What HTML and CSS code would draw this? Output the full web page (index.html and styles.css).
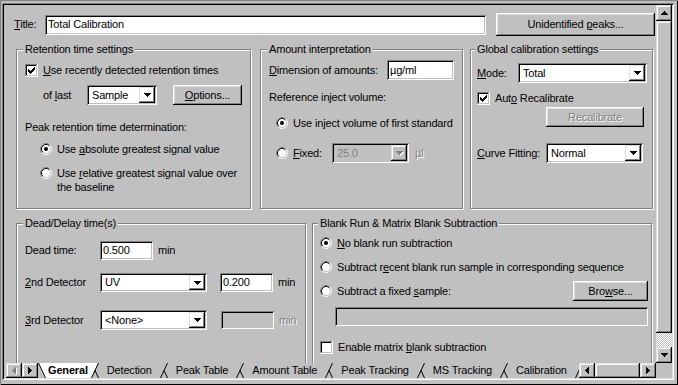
FILE: index.html
```html
<!DOCTYPE html>
<html>
<head>
<meta charset="utf-8">
<title>Total Calibration</title>
<link rel="stylesheet" href="styles.css">
</head>
<body>
<svg class="defs" width="0" height="0" aria-hidden="true">
  <defs>
    <symbol id="cb-on" viewBox="0 0 13 13">
      <rect x="0" y="0" width="13" height="13" fill="#fff"/>
      <rect x="0" y="0" width="12" height="1" fill="#808080"/>
      <rect x="0" y="0" width="1" height="12" fill="#808080"/>
      <rect x="1" y="1" width="10" height="1" fill="#000"/>
      <rect x="1" y="1" width="1" height="10" fill="#000"/>
      <rect x="1" y="11" width="11" height="1" fill="#c0c0c0"/>
      <rect x="11" y="1" width="1" height="11" fill="#c0c0c0"/>
      <path d="M3 5h1v3H3z M4 6h1v3H4z M5 7h1v3H5z M6 6h1v3H6z M7 5h1v3H7z M8 4h1v3H8z M9 3h1v3H9z" fill="#000"/>
    </symbol>
    <symbol id="cb-off" viewBox="0 0 13 13">
      <rect x="0" y="0" width="13" height="13" fill="#fff"/>
      <rect x="0" y="0" width="12" height="1" fill="#808080"/>
      <rect x="0" y="0" width="1" height="12" fill="#808080"/>
      <rect x="1" y="1" width="10" height="1" fill="#000"/>
      <rect x="1" y="1" width="1" height="10" fill="#000"/>
      <rect x="1" y="11" width="11" height="1" fill="#c0c0c0"/>
      <rect x="11" y="1" width="1" height="11" fill="#c0c0c0"/>
    </symbol>
    <symbol id="rd-off" viewBox="0 0 12 12">
      <circle cx="6" cy="6" r="5" fill="#fff"/>
      <path d="M2.11 9.89A5.5 5.5 0 0 1 9.89 2.11" fill="none" stroke="#808080"/>
      <path d="M9.89 2.11A5.5 5.5 0 0 1 2.11 9.89" fill="none" stroke="#fff"/>
      <path d="M2.82 9.18A4.5 4.5 0 0 1 9.18 2.82" fill="none" stroke="#000"/>
      <path d="M9.18 2.82A4.5 4.5 0 0 1 2.82 9.18" fill="none" stroke="#c0c0c0"/>
    </symbol>
    <symbol id="rd-on" viewBox="0 0 12 12">
      <circle cx="6" cy="6" r="5" fill="#fff"/>
      <path d="M2.11 9.89A5.5 5.5 0 0 1 9.89 2.11" fill="none" stroke="#808080"/>
      <path d="M9.89 2.11A5.5 5.5 0 0 1 2.11 9.89" fill="none" stroke="#fff"/>
      <path d="M2.82 9.18A4.5 4.5 0 0 1 9.18 2.82" fill="none" stroke="#000"/>
      <path d="M9.18 2.82A4.5 4.5 0 0 1 2.82 9.18" fill="none" stroke="#c0c0c0"/>
      <circle cx="6" cy="6" r="2" fill="#000"/>
    </symbol>
    <symbol id="ar-d" viewBox="0 0 7 4">
      <path d="M0 0h7v1H0z M1 1h5v1H1z M2 2h3v1H2z M3 3h1v1H3z" fill="#000"/>
    </symbol>
    <symbol id="ar-d-dis" viewBox="0 0 8 5">
      <path d="M1 1h7v1H1z M2 2h5v1H2z M3 3h3v1H3z M4 4h1v1H4z" fill="#fff"/>
      <path d="M0 0h7v1H0z M1 1h5v1H1z M2 2h3v1H2z M3 3h1v1H3z" fill="#808080"/>
    </symbol>
    <symbol id="ar-u" viewBox="0 0 7 4">
      <path d="M3 0h1v1H3z M2 1h3v1H2z M1 2h5v1H1z M0 3h7v1H0z" fill="#000"/>
    </symbol>
    <symbol id="ar-l" viewBox="0 0 4 7">
      <path d="M3 0h1v7H3z M2 1h1v5H2z M1 2h1v3H1z M0 3h1v1H0z" fill="#000"/>
    </symbol>
    <symbol id="ar-l-dis" viewBox="0 0 5 8">
      <path d="M4 1h1v7H4z M3 2h1v5H3z M2 3h1v3H2z M1 4h1v1H1z" fill="#fff"/>
      <path d="M3 0h1v7H3z M2 1h1v5H2z M1 2h1v3H1z M0 3h1v1H0z" fill="#808080"/>
    </symbol>
    <symbol id="ar-r" viewBox="0 0 4 7">
      <path d="M0 0h1v7H0z M1 1h1v5H1z M2 2h1v3H2z M3 3h1v1H3z" fill="#000"/>
    </symbol>
  </defs>
</svg>

<div class="window">
  <div class="client">
    <div class="main">
      <div class="pane">
        <div class="title-row">
          <span class="lbl lbl-title"><u>T</u>itle:</span>
          <div class="field field-title">Total Calibration</div>
          <div class="btn btn-unid"><span>Unidentified <u>p</u>eaks...</span></div>
        </div>

        <div class="groups groups-top">
          <div class="group g-ret">
            <div class="gt">Retention time settings</div>
            <div class="row r-ret1">
              <svg class="cb"><use href="#cb-on"/></svg>
              <span class="cb-lbl"><u>U</u>se recently detected retention times</span>
            </div>
            <div class="row r-ret2">
              <span class="lbl lbl-oflast">of <u>l</u>ast</span>
              <div class="combo combo-sample">
                <span class="combo-text">Sample</span>
                <span class="dd"><svg class="arr-d"><use href="#ar-d"/></svg></span>
              </div>
              <div class="btn btn-options"><span><u>O</u>ptions...</span></div>
            </div>
            <div class="r-ret3">Peak retention time determination:</div>
            <div class="row r-ret4">
              <svg class="radio"><use href="#rd-on"/></svg>
              <span class="rd-lbl">Use <u>a</u>bsolute greatest signal value</span>
            </div>
            <div class="row r-ret5">
              <svg class="radio radio-top"><use href="#rd-off"/></svg>
              <span class="rd-lbl">Use <u>r</u>elative greatest signal value over<br>the baseline</span>
            </div>
          </div>

          <div class="group g-amt">
            <div class="gt">Amount interpretation</div>
            <div class="row r-amt1">
              <span class="lbl lbl-dim"><u>D</u>imension of amounts:</span>
              <div class="field field-dim">µg/ml</div>
            </div>
            <div class="r-amt2">Reference inject volume:</div>
            <div class="row r-amt3">
              <svg class="radio"><use href="#rd-on"/></svg>
              <span class="rd-lbl">Use in<u>j</u>ect volume of first standard</span>
            </div>
            <div class="row r-amt4">
              <svg class="radio"><use href="#rd-off"/></svg>
              <span class="rd-lbl lbl-fixed"><u>F</u>ixed:</span>
              <div class="combo combo-fixed combo-dis">
                <span class="combo-text">25.0</span>
                <span class="dd"><svg class="arr-d-dis"><use href="#ar-d-dis"/></svg></span>
              </div>
              <span class="unit-ul dis">µl</span>
            </div>
          </div>

          <div class="group g-glob">
            <div class="gt">Global calibration settings</div>
            <div class="row r-gl1">
              <span class="lbl lbl-mode"><u>M</u>ode:</span>
              <div class="combo combo-mode">
                <span class="combo-text">Total</span>
                <span class="dd"><svg class="arr-d"><use href="#ar-d"/></svg></span>
              </div>
            </div>
            <div class="row r-gl2">
              <svg class="cb"><use href="#cb-on"/></svg>
              <span class="cb-lbl">Aut<u>o</u> Recalibrate</span>
            </div>
            <div class="row r-gl3">
              <div class="btn btn-recal dis"><span>Recalibrate</span></div>
            </div>
            <div class="row r-gl4">
              <span class="lbl lbl-curve"><u>C</u>urve Fitting:</span>
              <div class="combo combo-curve">
                <span class="combo-text">Normal</span>
                <span class="dd"><svg class="arr-d"><use href="#ar-d"/></svg></span>
              </div>
            </div>
          </div>
        </div>

        <div class="groups groups-bot">
          <div class="group g-dead">
            <div class="gt">Dead/Delay time(s)</div>
            <div class="row r-d1">
              <span class="lbl lbl-det">Dead time:</span>
              <div class="field field-num">0.500</div>
              <span class="unit">min</span>
            </div>
            <div class="row r-d2">
              <span class="lbl lbl-det"><u>2</u>nd Detector</span>
              <div class="combo combo-det">
                <span class="combo-text">UV</span>
                <span class="dd"><svg class="arr-d"><use href="#ar-d"/></svg></span>
              </div>
              <div class="field field-num field-delay">0.200</div>
              <span class="unit">min</span>
            </div>
            <div class="row r-d3">
              <span class="lbl lbl-det"><u>3</u>rd Detector</span>
              <div class="combo combo-det combo-det3">
                <span class="combo-text">&lt;None&gt;</span>
                <span class="dd"><svg class="arr-d"><use href="#ar-d"/></svg></span>
              </div>
              <div class="field field-num field-delay3 field-dis"></div>
              <span class="unit dis">min</span>
            </div>
          </div>

          <div class="group g-blank">
            <div class="gt">Blank Run &amp; Matrix Blank Subtraction</div>
            <div class="row r-b1">
              <svg class="radio"><use href="#rd-on"/></svg>
              <span class="rd-lbl"><u>N</u>o blank run subtraction</span>
            </div>
            <div class="row r-b2">
              <svg class="radio"><use href="#rd-off"/></svg>
              <span class="rd-lbl">Subtract r<u>e</u>cent blank run sample in corresponding sequence</span>
            </div>
            <div class="row r-b3">
              <svg class="radio"><use href="#rd-off"/></svg>
              <span class="rd-lbl">Subtract a fixed <u>s</u>ample:</span>
              <div class="btn btn-browse"><span>Bro<u>w</u>se...</span></div>
            </div>
            <div class="row r-b4">
              <div class="field field-dis field-sample"></div>
            </div>
            <div class="row r-b5">
              <svg class="cb"><use href="#cb-off"/></svg>
              <span class="cb-lbl">Enable matrix <u>b</u>lank subtraction</span>
            </div>
          </div>
        </div>
      </div>

      <div class="vscroll">
        <div class="sbtn"><svg class="arr-d"><use href="#ar-u"/></svg></div>
        <div class="vthumb"></div>
        <div class="vtrack"></div>
        <div class="sbtn"><svg class="arr-d"><use href="#ar-d"/></svg></div>
      </div>
    </div>

    <div class="tabbar">
      <div class="sbtn navbtn nav-first"><svg class="arr-l-dis"><use href="#ar-l-dis"/></svg></div>
      <div class="sbtn navbtn"><svg class="arr-l"><use href="#ar-r"/></svg></div>
      <div class="tabs">
        <svg class="sep" viewBox="0 0 8 15"><polygon points="0,0 8,0 8,15 7,15" fill="#fff"/><path d="M0.5 0L7.5 15" stroke="#000" fill="none"/></svg>
        <span class="tab tab-active">General</span>
        <svg class="sep" viewBox="0 0 8 15"><polygon points="0,0 7,0 0,15" fill="#fff"/><path d="M0.5 15L7.5 0M4 7.5L7.5 15" stroke="#000" fill="none"/></svg>
        <span class="tab">Detection</span>
        <svg class="sep" viewBox="0 0 8 15"><path d="M0.5 15L7.5 0M4 7.5L7.5 15" stroke="#000" fill="none"/></svg>
        <span class="tab">Peak Table</span>
        <svg class="sep" viewBox="0 0 8 15"><path d="M0.5 15L7.5 0M4 7.5L7.5 15" stroke="#000" fill="none"/></svg>
        <span class="tab">Amount Table</span>
        <svg class="sep" viewBox="0 0 8 15"><path d="M0.5 15L7.5 0M4 7.5L7.5 15" stroke="#000" fill="none"/></svg>
        <span class="tab">Peak Tracking</span>
        <svg class="sep" viewBox="0 0 8 15"><path d="M0.5 15L7.5 0M4 7.5L7.5 15" stroke="#000" fill="none"/></svg>
        <span class="tab">MS Tracking</span>
        <svg class="sep" viewBox="0 0 8 15"><path d="M0.5 15L7.5 0M4 7.5L7.5 15" stroke="#000" fill="none"/></svg>
        <span class="tab">Calibration</span>
        <svg class="sep" viewBox="0 0 8 15"><path d="M0.5 15L7.5 0" stroke="#000" fill="none"/></svg>
      </div>
      <div class="hscroll">
        <div class="sbtn navbtn"><svg class="arr-l"><use href="#ar-l"/></svg></div>
        <div class="hthumb"></div>
        <div class="sbtn navbtn"><svg class="arr-l"><use href="#ar-r"/></svg></div>
      </div>
      <div class="corner"></div>
    </div>
  </div>
</div>
</body>
</html>
```

FILE: styles.css
```css
* { box-sizing: border-box; }
html, body { margin: 0; padding: 0; }
body {
  width: 678px;
  height: 385px;
  overflow: hidden;
  background: #c0c0c0;
  font-family: "Liberation Sans", Arial, sans-serif;
  font-size: 11px;
  line-height: 13px;
  letter-spacing: -0.17px;
  color: #000;
}
.defs { display: block; width: 0; height: 0; overflow: hidden; }
u { text-decoration: underline; text-underline-offset: 1px; }

.window {
  width: 678px;
  height: 385px;
  padding: 3px 4px 5px 2px;
  box-shadow: inset 1px 1px #808080, inset -1px -1px #000;
}
.client {
  width: 672px;
  height: 377px;
  padding: 2px;
  box-shadow: inset 1px 1px #808080, inset -1px -1px #fff, inset 2px 2px #000, inset -2px -2px #dfdfdf;
  display: flex;
  flex-direction: column;
}
.main { display: flex; height: 358px; flex: none; }
.pane { width: 652px; height: 358px; overflow: hidden; flex: none; }

/* bevels */
.sbtn, .vthumb, .hthumb, .dd {
  box-shadow: inset -1px -1px #000, inset 1px 1px #dfdfdf, inset -2px -2px #808080, inset 2px 2px #fff;
}
.btn {
  display: flex;
  align-items: center;
  justify-content: center;
  flex: none;
  white-space: nowrap;
  box-shadow: inset -1px -1px #000, inset 1px 1px #fff, inset -2px -2px #808080, inset 2px 2px #dfdfdf;
}
.field, .combo {
  flex: none;
  background: #fff;
  box-shadow: inset 1px 1px #808080, inset -1px -1px #fff, inset 2px 2px #000, inset -2px -2px #c0c0c0;
}
.field { display: flex; align-items: center; padding: 0 3px; }
.field-dis { background: #c0c0c0; }
.combo { display: flex; padding: 2px; }
.combo-text { flex: 1; display: flex; align-items: center; padding-left: 3px; }
.combo-dis { background: #c0c0c0; color: #808080; }
.dd { width: 16px; flex: none; display: flex; align-items: center; justify-content: center; }
.arr-d { width: 7px; height: 4px; display: block; }
.arr-d-dis { width: 8px; height: 5px; display: block; margin-left: 1px; }
.arr-l { width: 4px; height: 7px; display: block; }
.arr-l-dis { width: 5px; height: 8px; display: block; margin-left: 1px; }
.dis { color: #808080; text-shadow: 1px 1px 0 #fff; }

.row { display: flex; align-items: center; }
.lbl { flex: none; white-space: nowrap; }
.cb { width: 13px; height: 13px; flex: none; display: block; }
.cb-lbl { margin-left: 5px; white-space: nowrap; }
.radio { width: 12px; height: 12px; flex: none; display: block; }
.rd-lbl { margin-left: 5px; white-space: nowrap; }

/* title row */
.title-row { display: flex; align-items: center; height: 23px; margin: 8px 0 0 10px; }
.lbl-title { width: 31px; }
.field-title { width: 441px; height: 20px; }
.btn-unid { width: 159px; height: 23px; margin-left: 10px; }

/* groups */
.groups { display: flex; padding-left: 12px; }
.groups-top { margin-top: 13px; }
.groups-bot { margin-top: 14px; }
.group {
  flex: none;
  border: 1px solid #808080;
  box-shadow: inset 1px 1px #fff, 1px 1px #fff;
}
.gt {
  display: table;
  margin: -7px 0 0 -2px;
  padding: 0 2px;
  background: #c0c0c0;
  line-height: 13px;
  white-space: nowrap;
}
.g-ret { width: 235px; height: 160px; padding-left: 8px; }
.g-amt { width: 203px; height: 160px; margin-left: 9px; padding-left: 8px; }
.g-glob { width: 183px; height: 160px; margin-left: 7px; padding-left: 6px; }
.g-dead { width: 290px; height: 170px; padding-left: 8px; }
.g-blank { width: 340px; height: 170px; margin-left: 6px; padding-left: 7px; padding-right: 3px; }

/* retention */
.r-ret1 { margin-top: 7px; height: 14px; }
.r-ret2 { margin-top: 8px; height: 20px; }
.lbl-oflast { width: 44px; margin-left: 18px; }
.combo-sample { width: 70px; height: 20px; }
.btn-options { width: 69px; height: 20px; margin-left: 16px; }
.r-ret3 { margin-top: 16px; }
.r-ret4 { margin-top: 8px; height: 14px; padding-left: 15px; }
.r-ret5 { margin-top: 10px; padding-left: 15px; align-items: flex-start; line-height: 14px; }
.radio-top { margin-top: 1px; }

/* amount */
.r-amt1 { margin-top: 4px; height: 20px; }
.lbl-dim { width: 118px; }
.field-dim { width: 67px; height: 20px; }
.r-amt2 { margin-top: 11px; }
.r-amt3 { margin-top: 12px; height: 14px; padding-left: 7px; }
.r-amt4 { margin-top: 13px; height: 20px; padding-left: 7px; }
.lbl-fixed { width: 39px; }
.combo-fixed { width: 77px; height: 20px; }
.unit-ul { margin-left: 6px; }

/* global */
.r-gl1 { margin-top: 7px; height: 20px; }
.lbl-mode { width: 41px; }
.combo-mode { width: 129px; height: 20px; }
.r-gl2 { margin-top: 8px; height: 14px; }
.r-gl3 { margin-top: 2px; height: 20px; }
.btn-recal { width: 98px; height: 20px; margin-left: 69px; }
.r-gl4 { margin-top: 16px; height: 20px; }
.lbl-curve { width: 69px; }
.combo-curve { width: 97px; height: 20px; }

/* dead time */
.lbl-det { width: 75px; }
.field-num { width: 53px; height: 19px; }
.unit { margin-left: 5px; }
.r-d1 { margin-top: 11px; height: 19px; }
.r-d2 { margin-top: 13px; height: 19px; }
.combo-det { width: 107px; height: 19px; }
.field-delay { margin-left: 13px; }
.r-d3 { margin-top: 18px; height: 20px; }
.combo-det3 { height: 20px; }
.field-delay3 { margin-left: 14px; height: 18px; }

/* blank */
.r-b1 { margin-top: 6px; height: 14px; }
.r-b2 { margin-top: 10px; height: 14px; }
.r-b3 { margin-top: 7px; height: 20px; }
.btn-browse { width: 75px; height: 20px; margin-left: auto; }
.r-b4 { margin-top: 6px; height: 19px; }
.field-sample { width: 313px; height: 19px; margin-left: 15px; }
.r-b5 { margin-top: 14px; height: 14px; }

/* vertical scrollbar */
.vscroll { width: 16px; flex: none; display: flex; flex-direction: column; }
.sbtn { width: 16px; height: 16px; flex: none; display: flex; align-items: center; justify-content: center; }
.vthumb { height: 312px; flex: none; }
.vtrack {
  flex: 1;
  background: repeating-conic-gradient(#fff 0 25%, #c0c0c0 0 50%) 0 0 / 2px 2px;
}

/* tab bar */
.tabbar { display: flex; height: 15px; flex: none; }
.navbtn { height: 15px; }
.nav-first { margin-left: 2px; }
.tabs {
  flex: 1;
  display: flex;
  overflow: hidden;
  line-height: 15px;
}
.tab { padding: 0 8px; white-space: nowrap; flex: none; }
.tab-active { background: #fff; font-weight: bold; padding: 0 3px 0 2px; }
.sep { width: 8px; height: 15px; flex: none; display: block; }
.hscroll { display: flex; flex: none; }
.hthumb { width: 45px; height: 15px; flex: none; }
.corner { width: 16px; flex: none; }
```
